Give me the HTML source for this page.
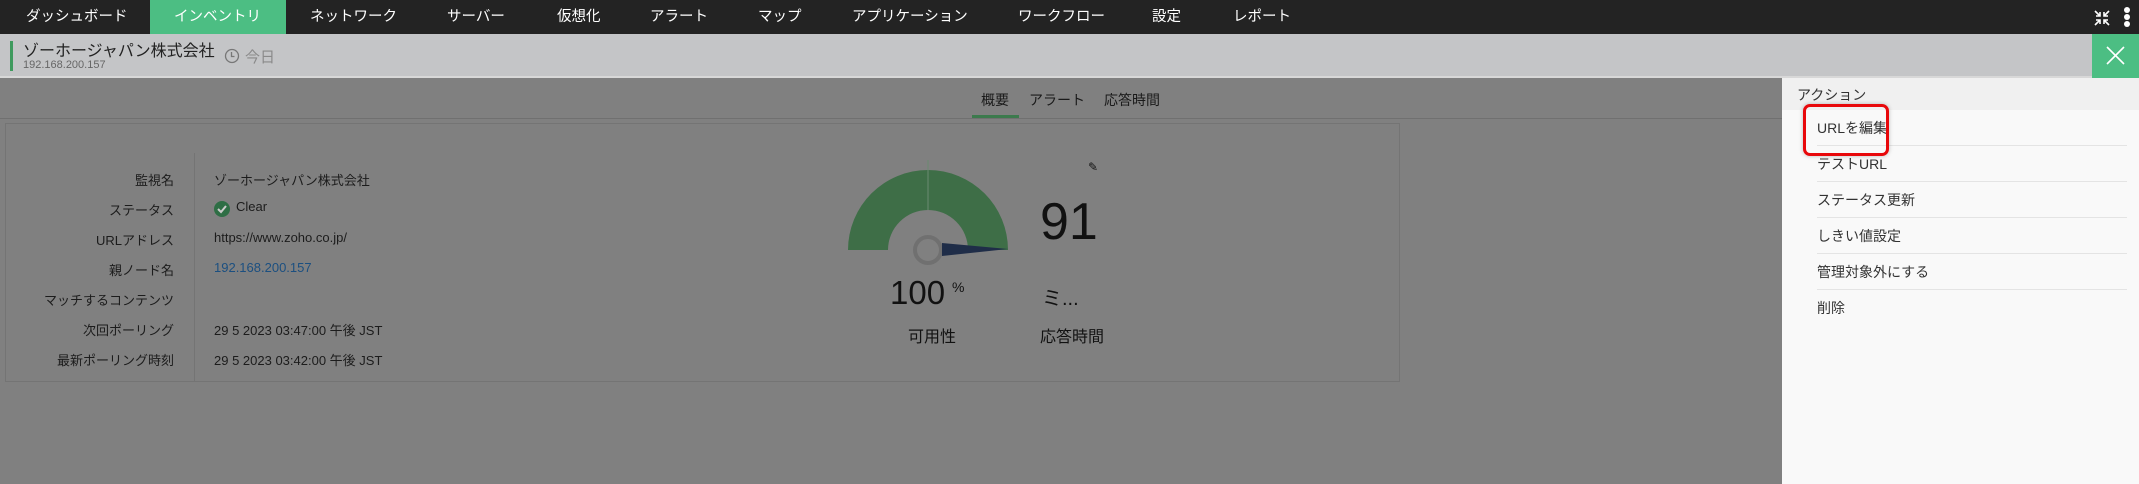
<!DOCTYPE html>
<html><head><meta charset="utf-8"><style>
*{margin:0;padding:0;box-sizing:border-box}
body{width:2139px;height:484px;overflow:hidden;background:#808080;font-family:"Liberation Sans","Noto Sans CJK JP",sans-serif;position:relative}
.a{position:absolute;white-space:nowrap}
#nav{left:0;top:0;width:2139px;height:34px;background:#232323}
.n{position:absolute;top:0;height:34px;line-height:34px;color:#fff;font-size:14.5px}
#hdr{left:0;top:34px;width:2139px;height:44px;background:#c4c5c7;border-bottom:2px solid #d8d8d8}
.lbl{position:absolute;right:1965px;font-size:13px;color:#1c1c1c}
.val{position:absolute;left:214px;font-size:13px;color:#1c1c1c}
.it{position:absolute;left:1817px;width:310px;font-size:14px;color:#333;height:36px;line-height:36px;border-bottom:1px solid #e4e4e4}
</style></head><body>
<div class="a" id="nav"></div>
<div class="a" style="left:150px;top:0;width:136px;height:34px;background:#4cbe83"></div>
<div class="n" style="left:26px">ダッシュボード</div>
<div class="n" style="left:174px">インベントリ</div>
<div class="n" style="left:310px">ネットワーク</div>
<div class="n" style="left:447px">サーバー</div>
<div class="n" style="left:557px">仮想化</div>
<div class="n" style="left:650px">アラート</div>
<div class="n" style="left:758px">マップ</div>
<div class="n" style="left:852px">アプリケーション</div>
<div class="n" style="left:1018px">ワークフロー</div>
<div class="n" style="left:1152px">設定</div>
<div class="n" style="left:1233px">レポート</div>
<svg class="a" style="left:2092px;top:8px" width="20" height="20" viewBox="0 0 20 20" stroke="#fff" stroke-width="1.6" fill="none"><path d="M3 3l5 5M8 4v4H4M17 3l-5 5M12 4v4h4M3 17l5-5M4 12h4v4M17 17l-5-5M16 12h-4v4"/></svg>
<div class="a" style="left:2124px;top:7px;width:6px;height:6px;border-radius:3px;background:#fff"></div>
<div class="a" style="left:2124px;top:14px;width:6px;height:6px;border-radius:3px;background:#fff"></div>
<div class="a" style="left:2124px;top:21px;width:6px;height:6px;border-radius:3px;background:#fff"></div>

<div class="a" id="hdr"></div>
<div class="a" style="left:10px;top:41px;width:3px;height:30px;background:#3f9a5e"></div>
<div class="a" style="left:23px;top:37px;font-size:16px;color:#222">ゾーホージャパン株式会社</div>
<div class="a" style="left:23px;top:59px;font-size:11px;color:#666">192.168.200.157</div>
<svg class="a" style="left:224px;top:48px" width="16" height="16" viewBox="0 0 16 16" fill="none" stroke="#777" stroke-width="1.3"><circle cx="8" cy="8" r="6.5"/><path d="M7.5 4v4.5h3"/></svg>
<div class="a" style="left:245px;top:46px;font-size:15px;color:#8a8a8a">今日</div>
<div class="a" style="left:2092px;top:34px;width:47px;height:44px;background:#4cbe83"></div>
<svg class="a" style="left:2104px;top:44px" width="24" height="24" stroke="#fff" stroke-width="1.6"><path d="M3 3l17 17M20 3L3 20"/></svg>

<div class="a" style="left:0;top:118px;width:1782px;height:1px;background:#707070"></div>
<div class="a" style="left:981px;top:90px;font-size:14px;color:#1a1a1a">概要</div>
<div class="a" style="left:1029px;top:90px;font-size:14px;color:#1a1a1a">アラート</div>
<div class="a" style="left:1104px;top:90px;font-size:14px;color:#1a1a1a">応答時間</div>
<div class="a" style="left:972px;top:115px;width:47px;height:3px;background:#3c7a4d"></div>

<div class="a" style="left:5px;top:123px;width:1395px;height:259px;border:1px solid #747474"></div>
<div class="a" style="left:194px;top:153px;width:1px;height:229px;background:#747474"></div>
<div class="lbl" style="top:170px">監視名</div><div class="val" style="top:170px">ゾーホージャパン株式会社</div>
<div class="lbl" style="top:200px">ステータス</div>
<svg class="a" style="left:214px;top:201px" width="16" height="16"><circle cx="8" cy="8" r="8" fill="#2e6e45"/><path d="M4 8l3 3 5-6" stroke="#ccc" stroke-width="2" fill="none"/></svg>
<div class="val" style="top:199px;left:236px">Clear</div>
<div class="lbl" style="top:230px">URLアドレス</div><div class="val" style="top:230px">https://www.zoho.co.jp/</div>
<div class="lbl" style="top:260px">親ノード名</div><div class="val" style="top:260px;color:#1b4f80">192.168.200.157</div>
<div class="lbl" style="top:290px">マッチするコンテンツ</div>
<div class="lbl" style="top:320px">次回ポーリング</div><div class="val" style="top:320px">29 5 2023 03:47:00 午後 JST</div>
<div class="lbl" style="top:350px">最新ポーリング時刻</div><div class="val" style="top:350px">29 5 2023 03:42:00 午後 JST</div>

<svg class="a" style="left:840px;top:150px" width="180" height="120">
<path d="M8 100A80 80 0 0 1 168 100H128A40 40 0 0 0 48 100Z" fill="#3e6e47"/>
<line x1="88" y1="10" x2="88" y2="60" stroke="#6a8a70" stroke-width="1"/>
<circle cx="88" cy="100" r="13" fill="none" stroke="#707070" stroke-width="4"/>
<path d="M102 93L102 106L168 99Z" fill="#1f2d48"/>
</svg>
<div class="a" style="left:890px;top:274px;font-size:33px;color:#111">100</div>
<div class="a" style="left:952px;top:279px;font-size:14px;color:#111">%</div>
<div class="a" style="left:908px;top:323px;font-size:16px;color:#111">可用性</div>
<div class="a" style="left:1040px;top:192px;font-size:52px;color:#111">91</div>
<div class="a" style="left:1088px;top:160px;font-size:12px;color:#111">✎</div>
<div class="a" style="left:1042px;top:282px;font-size:20px;color:#111">ミ...</div>
<div class="a" style="left:1040px;top:323px;font-size:16px;color:#111">応答時間</div>

<div class="a" style="left:1782px;top:78px;width:357px;height:406px;background:#f9f9f9"></div>
<div class="a" style="left:1782px;top:78px;width:357px;height:32px;background:#f0f0f0"></div>
<div class="a" style="left:1797px;top:85px;font-size:14px;color:#333">アクション</div>
<div class="it" style="top:110px">URLを編集</div>
<div class="it" style="top:146px">テストURL</div>
<div class="it" style="top:182px">ステータス更新</div>
<div class="it" style="top:218px">しきい値設定</div>
<div class="it" style="top:254px">管理対象外にする</div>
<div class="it" style="top:290px;border:none">削除</div>
<div class="a" style="left:1803px;top:104px;width:86px;height:52px;border:3px solid #e8080b;border-radius:7px;box-shadow:0 0 4px rgba(0,0,0,.25)"></div>
</body></html>
